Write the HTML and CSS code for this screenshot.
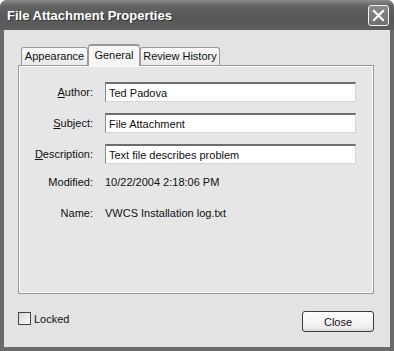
FILE: index.html
```html
<!DOCTYPE html>
<html>
<head>
  <meta charset="UTF-8">
  <title>File Attachment Properties</title>
  <link rel="stylesheet" href="styles.css">
</head>
<body>
  <div class="window">
    <div class="titlebar">
      <span class="title">File Attachment Properties</span>
      <button class="close-x" type="button">
        <svg width="13" height="13" viewBox="0 0 13 13">
          <path d="M2 2 L11 11 M11 2 L2 11" stroke="#fff" stroke-width="2.2" stroke-linecap="square"/>
        </svg>
      </button>
    </div>
    <div class="content">
      <div class="tabs">
        <div class="tab tab-appearance">Appearance</div>
        <div class="tab tab-general active">General</div>
        <div class="tab tab-review">Review History</div>
      </div>
      <div class="panel">
        <div class="form">
          <label><u>A</u>uthor:</label>
          <input type="text" value="Ted Padova">
          <label><u>S</u>ubject:</label>
          <input type="text" value="File Attachment">
          <label><u>D</u>escription:</label>
          <input type="text" value="Text file describes problem">
          <span class="lbl">Modified:</span>
          <span class="val">10/22/2004 2:18:06 PM</span>
          <span class="lbl">Name:</span>
          <span class="val">VWCS Installation log.txt</span>
        </div>
      </div>
      <div class="footer">
        <label class="check"><span class="box"></span>Locked</label>
        <button class="btn" type="button">Close</button>
      </div>
    </div>
  </div>
</body>
</html>
```

FILE: styles.css
```css
body {
  margin: 0;
  font-family: 'Liberation Sans', Arial, sans-serif;
  font-size: 11px;
  color: #111;
  background: #fff;
}
.window {
  width: 394px;
  height: 351px;
  box-sizing: border-box;
  display: flex;
  flex-direction: column;
  background: #6a6a6a;
  border-radius: 7px 7px 0 0;
  overflow: hidden;
}
.titlebar {
  height: 30px;
  flex: none;
  display: flex;
  align-items: center;
  justify-content: space-between;
  padding: 0 5px 0 7px;
  background: linear-gradient(#8c8c8c, #626262 20%, #575757 60%, #5e5e5e);
}
.title {
  color: #fff;
  font-weight: bold;
  font-size: 13px;
  text-shadow: 1px 1px 0 #333;
  padding-top: 1px;
}
.close-x {
  width: 21px;
  height: 21px;
  padding: 0;
  border: 1px solid #f2f2f2;
  border-radius: 3px;
  background: linear-gradient(#8a8a8a, #6e6e6e);
  display: flex;
  align-items: center;
  justify-content: center;
}
.content {
  flex: 1;
  margin: 0 4px 4px 4px;
  background: #e3e3e3;
  padding: 14px 16px 0 14px;
  display: flex;
  flex-direction: column;
}
.tabs {
  display: flex;
  align-items: flex-end;
  height: 21px;
  padding-left: 3px;
  position: relative;
  z-index: 1;
}
.tab {
  box-sizing: border-box;
  height: 18px;
  line-height: 17px;
  white-space: nowrap;
  text-align: center;
  border: 1px solid #9a9a9a;
  border-bottom: none;
  border-radius: 3px 3px 0 0;
  background: linear-gradient(#fafafa, #e9e9e9);
  color: #111;
}
.tab-appearance {
  width: 67px;
}
.tab-general {
  width: 52px;
}
.tab-review {
  width: 80px;
}
.tab.active {
  height: 22px;
  line-height: 18px;
  background: #f6f6f6;
  border-top: 2px solid #999;
  margin-bottom: -1px;
}
.panel {
  height: 227px;
  border: 1px solid #9a9a9a;
  background: #e6e6e6;
  box-shadow: inset 1px 1px 0 #fafafa, inset -1px -1px 0 #fafafa;
}
.form {
  display: grid;
  grid-template-columns: 74px 251px;
  grid-template-rows: 20px 20px 20px 20px 20px;
  column-gap: 12px;
  row-gap: 11px;
  padding: 16px 0 0 0;
}
.form label, .form .lbl {
  text-align: right;
  line-height: 20px;
}
.form .lbl, .form .val {
  line-height: 14px;
}
.form u {
  text-decoration: underline;
  text-underline-offset: 1px;
}
input[type="text"] {
  box-sizing: border-box;
  height: 20px;
  width: 251px;
  margin: 0;
  padding: 1px 3px 0 3px;
  font-family: 'Liberation Sans', Arial, sans-serif;
  font-size: 11px;
  color: #111;
  background: #fff;
  border: 1px solid #d6d6d6;
  border-top: 2px solid #6e6e6e;
  border-left: 1px solid #8a8a8a;
  outline: none;
}
.footer {
  display: flex;
  justify-content: space-between;
  align-items: flex-start;
  margin-top: 17px;
}
.check {
  display: flex;
  align-items: center;
  gap: 3px;
  margin-top: 1px;
  color: #111;
}
.box {
  width: 11px;
  height: 11px;
  border: 1px solid #444;
  background: linear-gradient(135deg, #d8d8d8, #fafafa);
}
.btn {
  width: 72px;
  height: 21px;
  border: 1px solid #3c3c3c;
  border-radius: 3px;
  background: linear-gradient(#fdfdfd, #f0f0f0 80%, #d8d8d8);
  font-family: 'Liberation Sans', Arial, sans-serif;
  font-size: 11px;
  color: #111;
  padding: 0;
}
```
